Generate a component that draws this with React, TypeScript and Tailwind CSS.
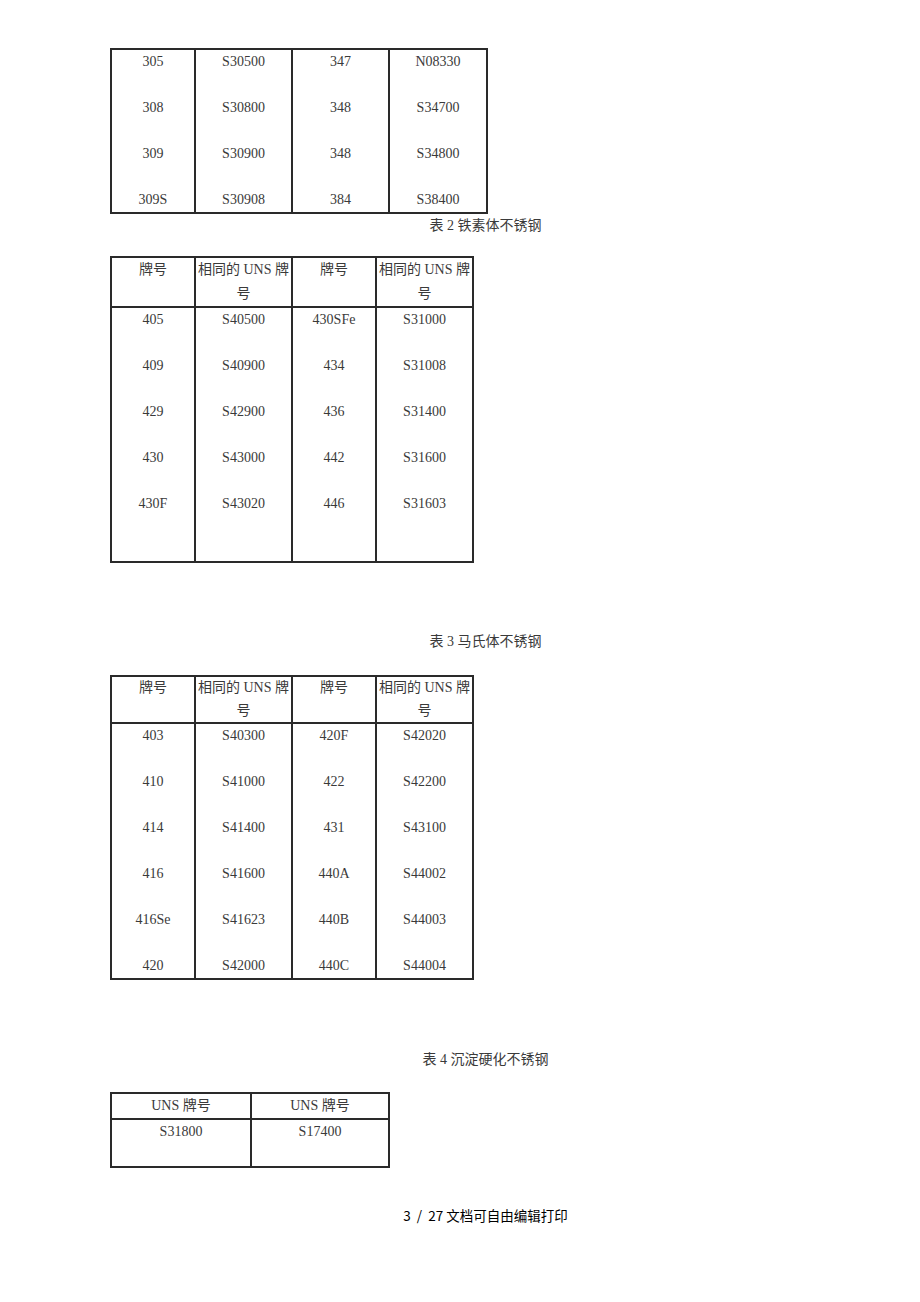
import React from "react";

// rows for each table: [grade, uns, grade, uns]
const table1: string[][] = [
  ["305", "S30500", "347", "N08330"],
  ["308", "S30800", "348", "S34700"],
  ["309", "S30900", "348", "S34800"],
  ["309S", "S30908", "384", "S38400"],
];

const table2: string[][] = [
  ["405", "S40500", "430SFe", "S31000"],
  ["409", "S40900", "434", "S31008"],
  ["429", "S42900", "436", "S31400"],
  ["430", "S43000", "442", "S31600"],
  ["430F", "S43020", "446", "S31603"],
];

const table3: string[][] = [
  ["403", "S40300", "420F", "S42020"],
  ["410", "S41000", "422", "S42200"],
  ["414", "S41400", "431", "S43100"],
  ["416", "S41600", "440A", "S44002"],
  ["416Se", "S41623", "440B", "S44003"],
  ["420", "S42000", "440C", "S44004"],
];

const cell = "border-[#2a2a2a] text-center align-top p-0 leading-[24px] whitespace-nowrap";

const Caption = ({ children }: { children: React.ReactNode }) => (
  <p className="w-[751px] text-center text-[14px] leading-[24px] text-[#3a3a3a]">{children}</p>
);

const HeadRow = ({ tight }: { tight?: boolean }) => {
  const c = cell + " border-2" + (tight ? " !leading-[22.5px]" : "");
  return (
    <tr>
      <td className={c}>牌号</td>
      <td className={c}>
        相同的 UNS 牌<br />号
      </td>
      <td className={c}>牌号</td>
      <td className={c}>
        相同的 UNS 牌<br />号
      </td>
    </tr>
  );
};

// data rows only carry vertical rules; top/bottom edges on the first/last row
const Body = ({ rows, lastPad, top }: { rows: string[][]; lastPad: string; top?: boolean }) => (
  <tbody>
    {rows.map((r, i) => {
      const last = i === rows.length - 1;
      let cls = cell + " border-x-2 " + (last ? lastPad + " border-b-2" : "pb-[22px]");
      if (top && i === 0) cls += " border-t-2";
      return (
        <tr key={i}>
          {r.map((v, j) => (
            <td key={j} className={cls}>
              {v}
            </td>
          ))}
        </tr>
      );
    })}
  </tbody>
);

export default function App() {
  return (
    <div
      className="w-[920px] min-h-[1302px] bg-white pl-[110px] pt-[48px] text-[#3a3a3a] text-[14px]"
      style={{ fontFamily: '"Liberation Serif", "Noto Sans CJK SC", serif' }}
    >
      <table className="border-collapse table-fixed">
        <colgroup>
          <col className="w-[84px]" />
          <col className="w-[97px]" />
          <col className="w-[97px]" />
          <col className="w-[98px]" />
        </colgroup>
        <Body rows={table1} lastPad="pb-0" top />
      </table>
      <Caption>表 2 铁素体不锈钢</Caption>

      <table className="border-collapse table-fixed mt-[18px]">
        <colgroup>
          <col className="w-[84px]" />
          <col className="w-[97px]" />
          <col className="w-[84px]" />
          <col className="w-[97px]" />
        </colgroup>
        <thead>
          <HeadRow />
        </thead>
        <Body rows={table2} lastPad="pb-[45px]" />
      </table>

      <div className="mt-[67px]">
        <Caption>表 3 马氏体不锈钢</Caption>
      </div>

      <table className="border-collapse table-fixed mt-[21px]">
        <colgroup>
          <col className="w-[84px]" />
          <col className="w-[97px]" />
          <col className="w-[84px]" />
          <col className="w-[97px]" />
        </colgroup>
        <thead>
          <HeadRow tight />
        </thead>
        <Body rows={table3} lastPad="pb-0" />
      </table>

      <div className="mt-[68px]">
        <Caption>表 4 沉淀硬化不锈钢</Caption>
      </div>

      <table className="border-collapse table-fixed mt-[20px]">
        <colgroup>
          <col className="w-[140px]" />
          <col className="w-[138px]" />
        </colgroup>
        <tbody>
          <tr>
            <td className={cell + " border-2"}>UNS 牌号</td>
            <td className={cell + " border-2"}>UNS 牌号</td>
          </tr>
          <tr>
            <td className={cell + " border-2 pb-[22px]"}>S31800</td>
            <td className={cell + " border-2 pb-[22px]"}>S17400</td>
          </tr>
        </tbody>
      </table>

      <p
        className="w-[751px] mt-[35px] text-center text-[13.5px] leading-[24px] text-black"
        style={{ fontFamily: '"Noto Sans CJK SC", sans-serif' }}
      >
        3&nbsp;&nbsp;/&nbsp;&nbsp;27 文档可自由编辑打印
      </p>
    </div>
  );
}
